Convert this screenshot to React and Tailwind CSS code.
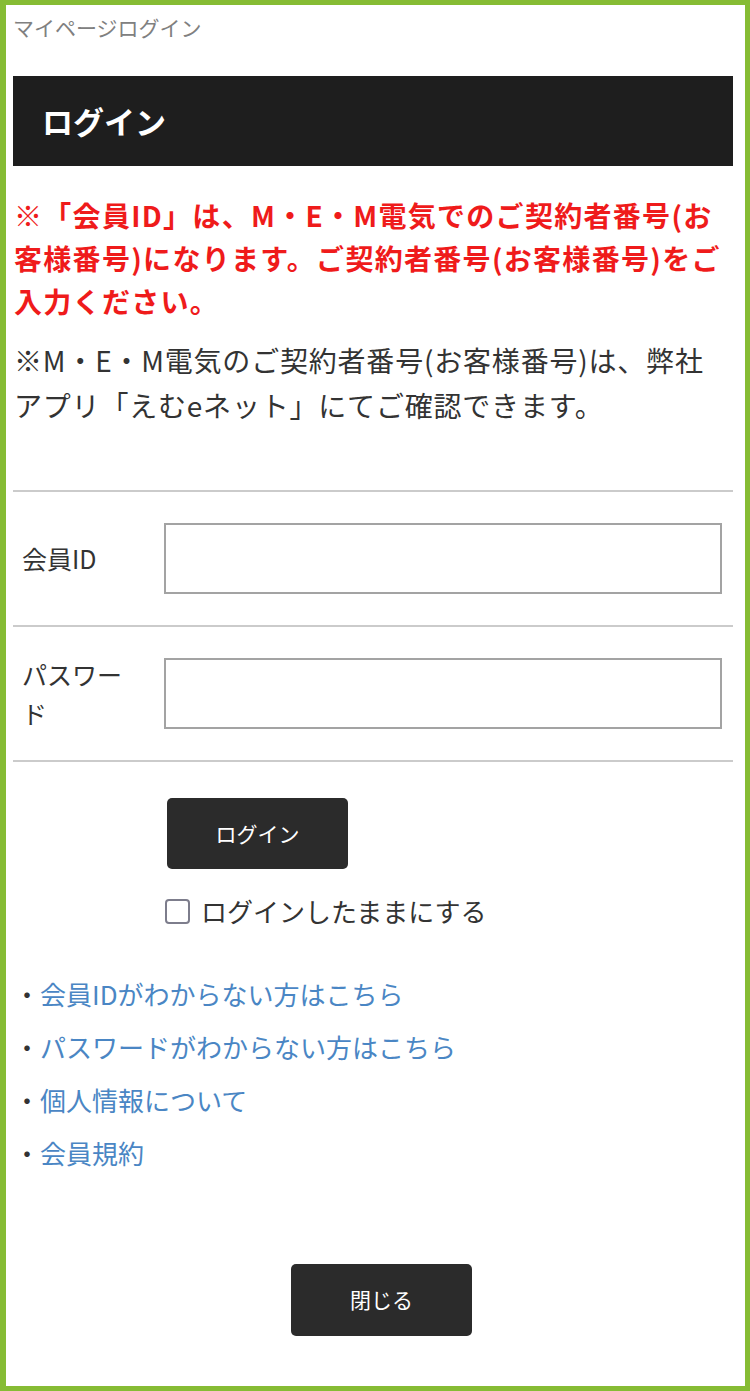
import React, { useState } from "react";

const font = { fontFamily: '"Noto Sans CJK JP", "Noto Sans", sans-serif' };

const links = [
  "会員IDがわからない方はこちら",
  "パスワードがわからない方はこちら",
  "個人情報について",
  "会員規約",
];

function FieldRow({ label, type }) {
  return (
    <div className="flex items-center border-b-2 border-[#cbcbcb] pt-[31px] pb-[31px]">
      <div className="-my-[5px] w-[151px] shrink-0 pl-[9px] pr-[32px] text-[25px] leading-[39px] text-[#333]">
        {label}
      </div>
      <input
        type={type}
        className="mr-[11px] h-[71px] flex-1 border-2 border-[#a3a3a3] bg-white px-3 text-[24px] outline-none"
      />
    </div>
  );
}

export default function App() {
  const [keep, setKeep] = useState(false);

  return (
    <div
      className="h-[1391px] w-[750px] overflow-hidden border-[5px] border-l-[6px] border-[#86bc34] bg-white"
      style={font}
    >
      <div className="pl-[7px] pr-[12px]">
        <p className="pt-[9px] text-[21px] leading-[26px] text-[#808080]">
          マイページログイン
        </p>

        <div className="mt-[36px] flex h-[90px] items-center bg-[#1e1e1e] px-[29px]">
          <h1 className="text-[31px] font-bold text-white">ログイン</h1>
        </div>

        <p className="mt-[28px] pl-[1px] text-[28px] font-bold leading-[43px] tracking-[1.3px] text-[#ef1b1b]">
          ※「会員ID」は、M・E・M電気でのご契約者番号(お
          <br />
          客様番号)になります。ご契約者番号(お客様番号)をご
          <br />
          入力ください。
        </p>

        <p className="mt-[15px] pl-[1px] text-[28px] leading-[45px] tracking-[0.8px] text-[#333]">
          ※M・E・M電気のご契約者番号(お客様番号)は、弊社
          <br />
          アプリ「えむeネット」にてご確認できます。
        </p>

        {/* フォーム */}
        <div className="mt-[62px] border-t-2 border-[#cbcbcb]">
          <FieldRow label="会員ID" type="text" />
          <FieldRow label="パスワード" type="password" />
        </div>

        <button className="ml-[154px] mt-[36px] flex h-[71px] w-[181px] items-center justify-center rounded-[5px] bg-[#2b2b2b] text-[21px] text-white">
          ログイン
        </button>

        <label className="ml-[152px] mt-[29px] flex items-center gap-[11px]">
          <input
            type="checkbox"
            checked={keep}
            onChange={(e) => setKeep(e.target.checked)}
            className="h-[25px] w-[25px] appearance-none rounded-[4px] border-2 border-[#7d7d8c] bg-white"
          />
          <span className="text-[26px] leading-[26px] text-[#333]">
            ログインしたままにする
          </span>
        </label>

        <ul className="mt-[43px] pl-[1px]">
          {links.map((t) => (
            <li key={t} className="flex text-[26px] leading-[53px]">
              <span className="text-[#333]">・</span>
              <a href="#" className="text-[#4a86c4]">
                {t}
              </a>
            </li>
          ))}
        </ul>

        <button className="ml-[278px] mt-[85px] flex h-[72px] w-[181px] items-center justify-center rounded-[5px] bg-[#2b2b2b] text-[21px] text-white">
          閉じる
        </button>
      </div>
    </div>
  );
}
